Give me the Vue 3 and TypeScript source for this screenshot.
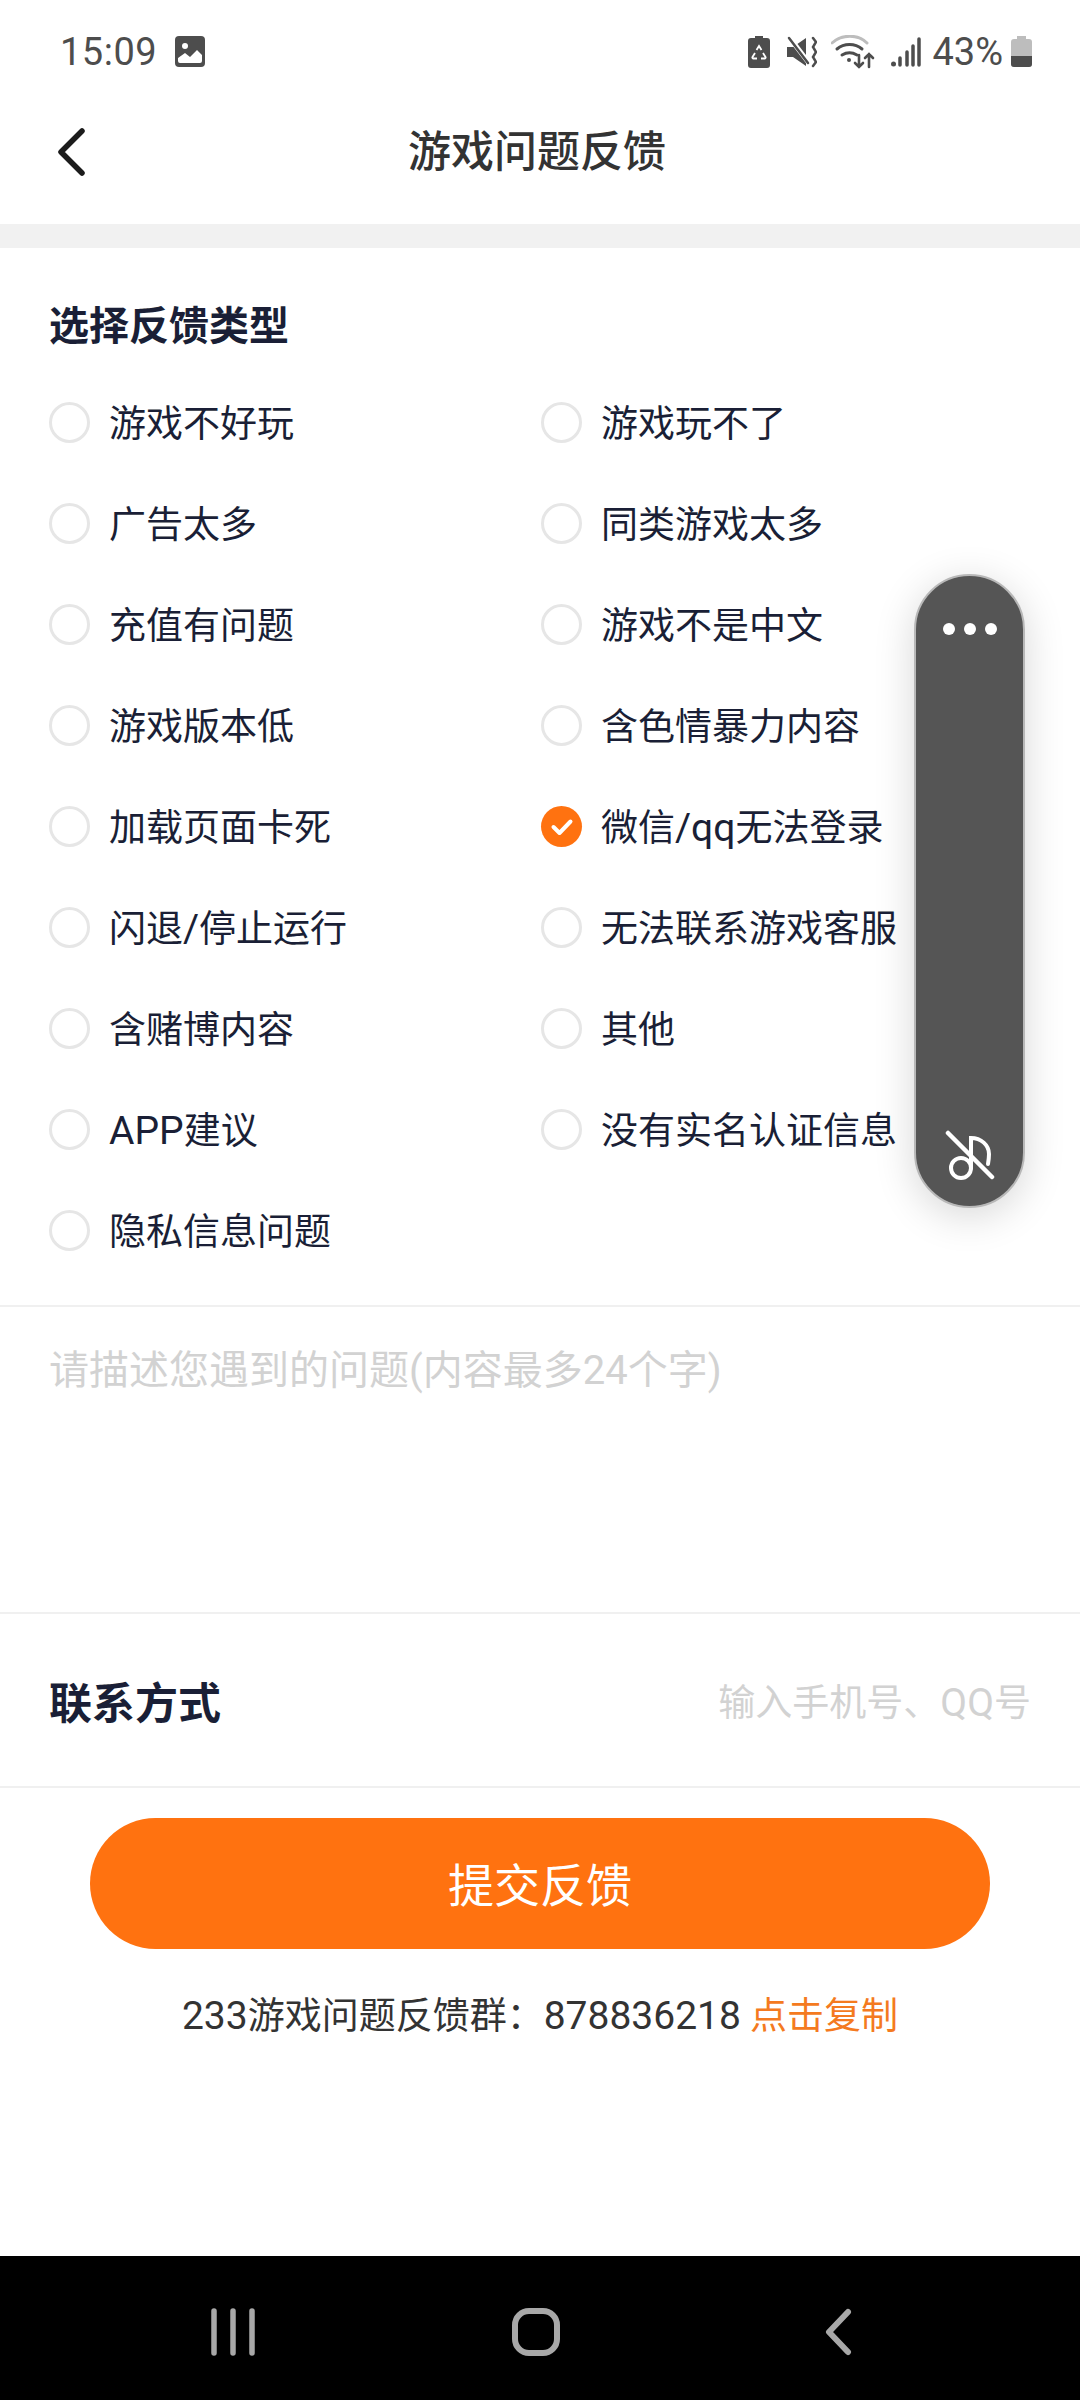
<template>
  <div class="page">
    <div class="status-bar">
      <span class="time">15:09</span>
      <svg class="pic-icon" width="30" height="31" viewBox="0 0 30 31">
        <rect width="30" height="31" rx="4" fill="#4d4d4d" />
        <circle cx="10" cy="10" r="3" fill="#fff" />
        <path d="M3 22l7-5 5 4 7-7 5 5v6a2 2 0 0 1-2 2H5a2 2 0 0 1-2-2z" fill="#fff" />
      </svg>
      <span class="spacer"></span>
      <svg class="st st-saver" width="22" height="32" viewBox="0 0 22 32">
        <path d="M7 0h8v2h4a3 3 0 0 1 3 3v24a3 3 0 0 1-3 3H3a3 3 0 0 1-3-3V5a3 3 0 0 1 3-3h4z" fill="#4d4d4d" />
        <path d="M8.500 14l2.500-4 2.500 4M15 17l2.500 4a1 1 0 0 1-1 1.500H13M9 22.500H5.500a1 1 0 0 1-1-1.500l2.500-4" fill="none" stroke="#fff" stroke-width="1.800" />
      </svg>
      <svg class="st st-mute" width="30" height="32" viewBox="0 0 30 32">
        <path d="M0 11h6L19 2v28L6 21H0z" fill="#4d4d4d" />
        <path d="M2 1l20 26" stroke="#fff" stroke-width="5" />
        <path d="M2 2l19 25" stroke="#4d4d4d" stroke-width="2.500" stroke-linecap="round" />
        <path d="M26 2l3 4-3 5 3 5-3 5 3 5-3 4" fill="none" stroke="#4d4d4d" stroke-width="2.500" stroke-linecap="round" />
      </svg>
      <svg class="st st-wifi" width="44" height="34" viewBox="0 0 44 34">
        <path d="M1 8C11-1 27-1 36 8" fill="none" stroke="#bdbdbd" stroke-width="3" stroke-linecap="round" />
        <path d="M6 14c7-6 18-6 25 0M11 20c5-3 10-3 15 0" fill="none" stroke="#4d4d4d" stroke-width="3" stroke-linecap="round" />
        <circle cx="18" cy="25" r="2" fill="#4d4d4d" />
        <path d="M28 20v12M24 28l4 4 4-4M38 32V19M34 23l4-4 4 4" fill="none" stroke="#4d4d4d" stroke-width="2.600" stroke-linecap="round" />
      </svg>
      <svg class="st st-signal" width="30" height="30" viewBox="0 0 30 30">
        <circle cx="2.500" cy="27" r="2.500" fill="#4d4d4d" />
        <path d="M9 21v7M16 15v13M22 9v19M28 2v26" stroke="#4d4d4d" stroke-width="3.500" stroke-linecap="round" />
      </svg>
      <span class="pct">43%</span>
      <svg class="st-batt" width="21" height="31" viewBox="0 0 21 31">
        <path d="M6 0h9v3h3a3 3 0 0 1 3 3v22a3 3 0 0 1-3 3H3a3 3 0 0 1-3-3V6a3 3 0 0 1 3-3h3z" fill="#bdbdbd" />
        <path d="M0 20h21v8a3 3 0 0 1-3 3H3a3 3 0 0 1-3-3z" fill="#4d4d4d" />
      </svg>
    </div>

    <div class="nav">
      <svg class="back" width="30" height="50" viewBox="0 0 30 50">
        <path d="M26 4L5 25l21 21" fill="none" stroke="#1c1c1c" stroke-width="5.500" stroke-linecap="round" stroke-linejoin="round" />
      </svg>
      <h1 class="nav-title">游戏问题反馈</h1>
    </div>
    <div class="band"></div>

    <section class="types">
      <h2 class="section-title">选择反馈类型</h2>
      <div class="grid">
        <label v-for="opt in options" :key="opt" class="opt">
          <span v-if="opt === selected" class="radio on">
            <svg width="24" height="20" viewBox="0 0 24 20">
              <path d="M3.500 10l6 6L20.500 4.500" fill="none" stroke="#fff" stroke-width="4" stroke-linecap="round" stroke-linejoin="round" />
            </svg>
          </span>
          <span v-else class="radio"></span>
          <span class="opt-text">
            <span v-for="(run, i) in splitRuns(opt)" :key="i" :class="{ lat: run.latin }">{{ run.text }}</span>
          </span>
        </label>
      </div>
    </section>

    <div class="desc">请描述您遇到的问题(内容最多24个字)</div>

    <div class="contact">
      <span class="contact-label">联系方式</span>
      <span class="contact-hint">输入手机号、<span class="lat">QQ</span>号</span>
    </div>

    <div class="submit-wrap">
      <button class="submit">提交反馈</button>
    </div>
    <p class="group"><span class="lat">233</span>游戏问题反馈群：<span class="lat">878836218</span> <span class="copy">点击复制</span></p>

    <div class="grow"></div>

    <div class="sys-nav">
      <svg width="44" height="48" viewBox="0 0 44 48">
        <path d="M3 3v42M22 3v42M41 3v42" stroke="#a8a8a8" stroke-width="5.500" stroke-linecap="round" />
      </svg>
      <svg width="48" height="48" viewBox="0 0 48 48">
        <rect x="3" y="3" width="42" height="42" rx="14" fill="none" stroke="#a8a8a8" stroke-width="6" />
      </svg>
      <svg width="30" height="48" viewBox="0 0 30 48">
        <path d="M25 4L6 24l19 20" fill="none" stroke="#a8a8a8" stroke-width="6" stroke-linecap="round" stroke-linejoin="round" />
      </svg>
    </div>

    <div class="float-bar">
      <div class="dots"><i></i><i></i><i></i></div>
      <svg width="50" height="50" viewBox="0 0 50 50">
        <circle cx="16" cy="38" r="10" fill="none" stroke="#fff" stroke-width="4" />
        <path d="M26 38V8c10 0 18 7 18 16 0 4-.5 7-1 10" fill="none" stroke="#fff" stroke-width="4" stroke-linecap="round" />
        <path d="M3 3l44 44" stroke="#fff" stroke-width="4.500" stroke-linecap="round" />
      </svg>
    </div>
  </div>
</template>

<script setup lang="ts">
interface Run {
  text: string
  latin: boolean
}

const selected = '微信/qq无法登录'

const options: string[] = [
  '游戏不好玩',
  '游戏玩不了',
  '广告太多',
  '同类游戏太多',
  '充值有问题',
  '游戏不是中文',
  '游戏版本低',
  '含色情暴力内容',
  '加载页面卡死',
  '微信/qq无法登录',
  '闪退/停止运行',
  '无法联系游戏客服',
  '含赌博内容',
  '其他',
  'APP建议',
  '没有实名认证信息',
  '隐私信息问题',
]

// latin letters sit a little larger than the CJK text around them
const splitRuns = (text: string): Run[] =>
  (text.match(/[A-Za-z/]+|[^A-Za-z/]+/g) ?? []).map((part) => ({
    text: part,
    latin: /^[A-Za-z/]/.test(part),
  }))
</script>

<style>
html,
body {
  margin: 0;
  background: #fff;
}
</style>

<style scoped>
.page {
  position: relative;
  width: 1080px;
  height: 2400px;
  display: flex;
  flex-direction: column;
  overflow: hidden;
  background: #fff;
  font-family: Roboto, "Noto Sans CJK SC", sans-serif;
  color: #1a1f36;
}

.status-bar {
  height: 96px;
  flex: none;
  display: flex;
  align-items: center;
  padding: 7px 48px 0 60px;
  box-sizing: border-box;
  color: #4d4d4d;
}

.time {
  font-size: 38px;
  letter-spacing: 0.5px;
}

.pic-icon {
  margin-left: 18px;
}

.spacer {
  flex: 1;
}

.st-mute {
  margin-left: 17px;
}

.st-wifi {
  margin-left: 14px;
}

.st-signal {
  margin-left: 16px;
}

.pct {
  margin-left: 11px;
  font-size: 38px;
}

.st-batt {
  margin-left: 8px;
}

.nav {
  height: 128px;
  flex: none;
  position: relative;
  display: flex;
  align-items: center;
  justify-content: center;
  box-sizing: border-box;
  padding: 0 6px 24px 0;
}

.back {
  position: absolute;
  left: 56px;
  top: 31px;
}

.nav-title {
  margin: 0;
  font-size: 43px;
  font-weight: 500;
  color: #333;
}

.band {
  height: 24px;
  flex: none;
  background: #f1f1f1;
}

.types {
  flex: none;
  padding: 49px 0 24px 49px;
  border-bottom: 2px solid #f0f0f0;
}

.section-title {
  margin: 0;
  height: 60px;
  line-height: 60px;
  font-size: 40px;
  font-weight: 700;
}

.grid {
  margin-top: 15px;
  display: grid;
  grid-template-columns: 492px 1fr;
  grid-auto-rows: 101px;
}

.opt {
  display: flex;
  align-items: center;
  gap: 19px;
}

.radio {
  width: 41px;
  height: 41px;
  flex: none;
  box-sizing: border-box;
  border: 3px solid #e6e6e6;
  border-radius: 50%;
  display: flex;
  align-items: center;
  justify-content: center;
}

.radio.on {
  border: none;
  background: #ff7210;
}

.opt-text {
  font-size: 37px;
  white-space: nowrap;
  margin-top: -4px;
}

.lat {
  font-size: 39px;
}

.desc {
  flex: none;
  height: 307px;
  box-sizing: border-box;
  padding: 36px 49px 0;
  font-size: 40px;
  line-height: 56px;
  color: #d2d2d2;
  border-bottom: 2px solid #f0f0f0;
}

.contact {
  flex: none;
  height: 174px;
  box-sizing: border-box;
  padding: 0 49px;
  display: flex;
  align-items: center;
  justify-content: space-between;
  border-bottom: 2px solid #f0f0f0;
}

.contact-label {
  font-size: 43px;
  font-weight: 700;
}

.contact-hint {
  font-size: 37px;
  color: #d2d2d2;
}

.submit-wrap {
  flex: none;
  padding: 30px 90px 0;
}

.submit {
  display: block;
  width: 100%;
  height: 131px;
  border: none;
  border-radius: 66px;
  background: #ff7210;
  color: #fff;
  font-family: inherit;
  font-size: 46px;
  padding: 0 0 4px;
}

.group {
  margin: 39px 0 0;
  text-align: center;
  font-size: 37px;
  line-height: 56px;
  color: #333;
}

.copy {
  color: #f47a20;
}

.grow {
  flex: 1;
}

.sys-nav {
  height: 144px;
  flex: none;
  background: #000;
  display: grid;
  grid-template-columns: 211px 44px 257px 48px 263px 30px;
  align-items: center;
  padding-top: 8px;
  box-sizing: border-box;
}

.sys-nav svg:nth-child(1) {
  grid-column: 2;
}

.sys-nav svg:nth-child(2) {
  grid-column: 4;
}

.sys-nav svg:nth-child(3) {
  grid-column: 6;
}

.float-bar {
  position: absolute;
  left: 914px;
  top: 574px;
  width: 111px;
  height: 634px;
  box-sizing: border-box;
  border: 2px solid #b8b8b8;
  border-radius: 56px;
  background: #555;
  box-shadow: 0 8px 40px rgba(0, 0, 0, 0.16);
  display: flex;
  flex-direction: column;
  align-items: center;
  justify-content: space-between;
  padding: 47px 0 26px;
}

.dots {
  display: flex;
  gap: 9px;
}

.dots i {
  display: block;
  width: 12px;
  height: 12px;
  border-radius: 50%;
  background: #fff;
}
</style>
